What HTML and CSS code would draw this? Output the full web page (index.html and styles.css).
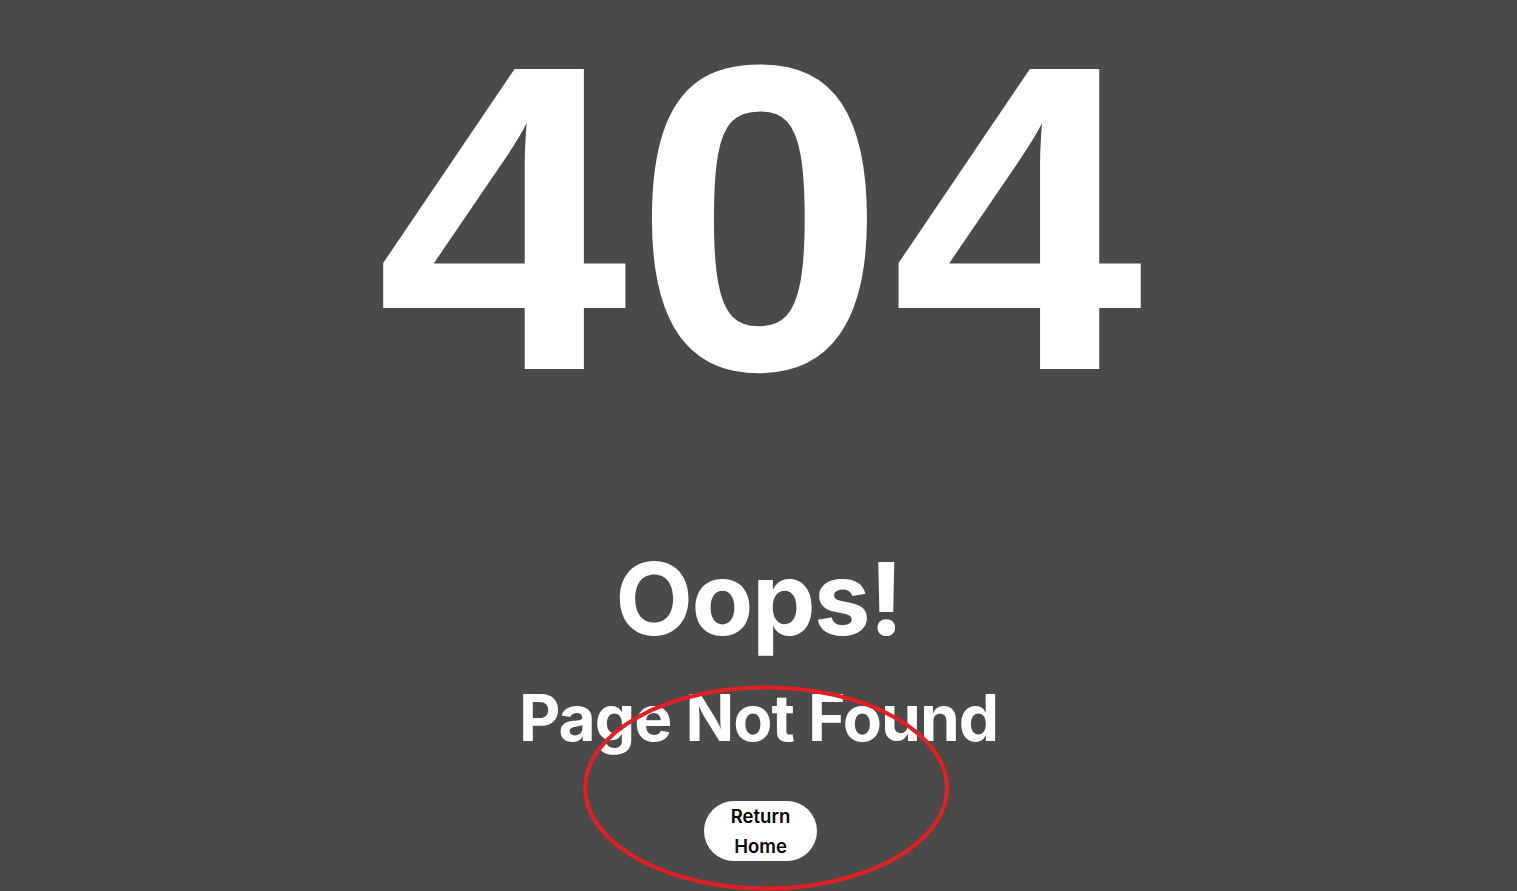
FILE: index.html
```html
<!DOCTYPE html>
<html lang="en">
<head>
<meta charset="utf-8">
<title>404 - Page Not Found</title>
<link rel="stylesheet" href="styles.css">
</head>
<body>
<main class="page">
  <h1 class="code">404</h1>
  <h2 class="oops">Oops!</h2>
  <h3 class="subtitle">Page Not Found</h3>
  <a class="btn" href="#">Return Home</a>
  <svg class="mark" width="372" height="208" viewBox="0 0 372 208" aria-hidden="true">
    <ellipse cx="186" cy="104" rx="181" ry="100.5" fill="none" stroke="#e31e24" stroke-width="4"/>
  </svg>
</main>
</body>
</html>
```
FILE: styles.css
```css
html, body {
  margin: 0;
  padding: 0;
  background: #4a4a4a;
  height: 100%;
  overflow: hidden;
}
.page {
  position: relative;
  min-height: 100%;
  display: flex;
  flex-direction: column;
  align-items: center;
  font-family: Inter, "Liberation Sans", sans-serif;
  color: #fff;
}
.code {
  margin: 0;
  font-family: "Liberation Sans", Arial, sans-serif;
  font-weight: 700;
  font-size: 436px;
  line-height: 1;
  letter-spacing: 6px;
  padding-left: 8px;
  transform: scaleX(1.037);
}
.oops {
  margin: 112px 0 0;
  font-weight: 700;
  font-size: 101px;
  line-height: 1;
  letter-spacing: -1.5px;
}
.subtitle {
  margin: 37px 0 0;
  font-weight: 700;
  font-size: 64px;
  line-height: 1;
  letter-spacing: -1px;
}
.btn {
  margin: 51px 0 0 4px;
  width: 113px;
  height: 60px;
  box-sizing: border-box;
  background: #fff;
  color: #000;
  border-radius: 30px;
  text-decoration: none;
  font-weight: 600;
  font-size: 18.5px;
  line-height: 30px;
  text-align: center;
  padding: 0 20px;
}
.mark {
  position: absolute;
  left: 580px;
  top: 684px;
}
```
